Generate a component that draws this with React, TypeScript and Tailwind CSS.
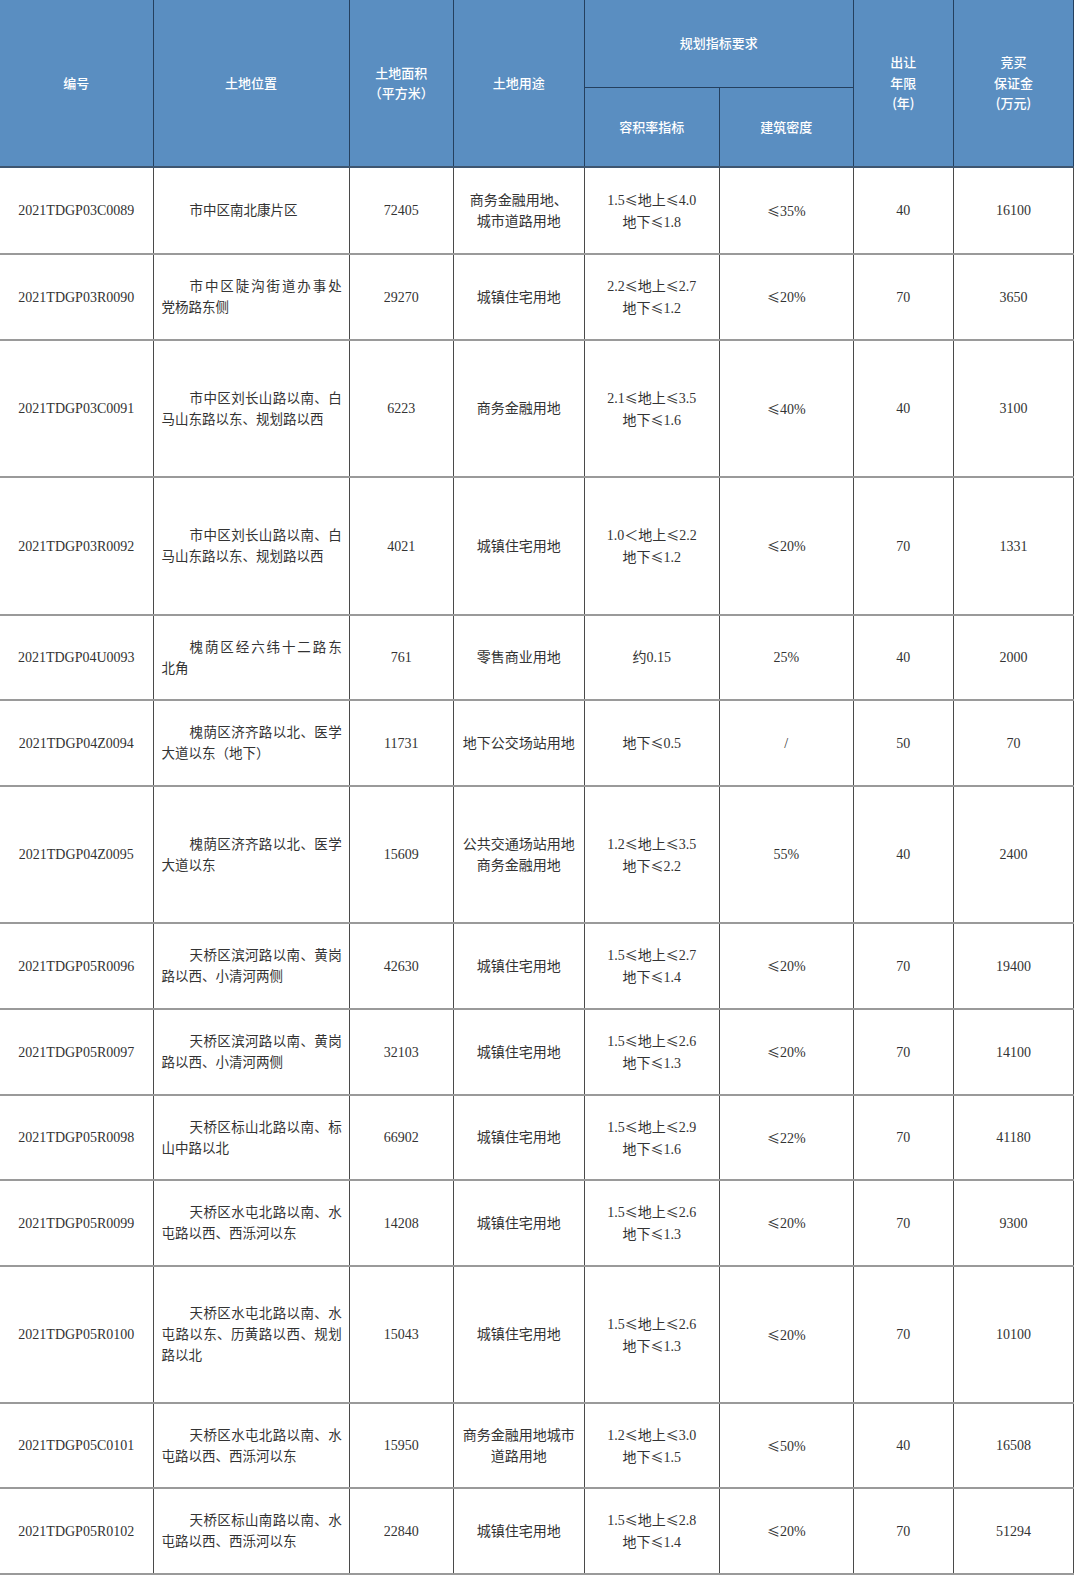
const COLS = [153, 196, 104, 131, 135, 134, 100, 120]

type Row = {
  code: string
  place: string[]
  area: string
  use: string[]
  ratio: string[]
  density: string
  years: string
  deposit: string
  h: number
}

const rows: Row[] = [
  { code: '2021TDGP03C0089', place: ['市中区南北康片区'], area: '72405', use: ['商务金融用地、', '城市道路用地'], ratio: ['1.5≤地上≤4.0', '地下≤1.8'], density: '≤35%', years: '40', deposit: '16100', h: 87 },
  { code: '2021TDGP03R0090', place: ['市中区陡沟街道办事处', '党杨路东侧'], area: '29270', use: ['城镇住宅用地'], ratio: ['2.2≤地上≤2.7', '地下≤1.2'], density: '≤20%', years: '70', deposit: '3650', h: 86 },
  { code: '2021TDGP03C0091', place: ['市中区刘长山路以南、白', '马山东路以东、规划路以西'], area: '6223', use: ['商务金融用地'], ratio: ['2.1≤地上≤3.5', '地下≤1.6'], density: '≤40%', years: '40', deposit: '3100', h: 137 },
  { code: '2021TDGP03R0092', place: ['市中区刘长山路以南、白', '马山东路以东、规划路以西'], area: '4021', use: ['城镇住宅用地'], ratio: ['1.0＜地上≤2.2', '地下≤1.2'], density: '≤20%', years: '70', deposit: '1331', h: 138 },
  { code: '2021TDGP04U0093', place: ['槐荫区经六纬十二路东', '北角'], area: '761', use: ['零售商业用地'], ratio: ['约0.15'], density: '25%', years: '40', deposit: '2000', h: 85 },
  { code: '2021TDGP04Z0094', place: ['槐荫区济齐路以北、医学', '大道以东（地下）'], area: '11731', use: ['地下公交场站用地'], ratio: ['地下≤0.5'], density: '/', years: '50', deposit: '70', h: 86 },
  { code: '2021TDGP04Z0095', place: ['槐荫区济齐路以北、医学', '大道以东'], area: '15609', use: ['公共交通场站用地', '商务金融用地'], ratio: ['1.2≤地上≤3.5', '地下≤2.2'], density: '55%', years: '40', deposit: '2400', h: 137 },
  { code: '2021TDGP05R0096', place: ['天桥区滨河路以南、黄岗', '路以西、小清河两侧'], area: '42630', use: ['城镇住宅用地'], ratio: ['1.5≤地上≤2.7', '地下≤1.4'], density: '≤20%', years: '70', deposit: '19400', h: 86 },
  { code: '2021TDGP05R0097', place: ['天桥区滨河路以南、黄岗', '路以西、小清河两侧'], area: '32103', use: ['城镇住宅用地'], ratio: ['1.5≤地上≤2.6', '地下≤1.3'], density: '≤20%', years: '70', deposit: '14100', h: 86 },
  { code: '2021TDGP05R0098', place: ['天桥区标山北路以南、标', '山中路以北'], area: '66902', use: ['城镇住宅用地'], ratio: ['1.5≤地上≤2.9', '地下≤1.6'], density: '≤22%', years: '70', deposit: '41180', h: 85 },
  { code: '2021TDGP05R0099', place: ['天桥区水屯北路以南、水', '屯路以西、西泺河以东'], area: '14208', use: ['城镇住宅用地'], ratio: ['1.5≤地上≤2.6', '地下≤1.3'], density: '≤20%', years: '70', deposit: '9300', h: 86 },
  { code: '2021TDGP05R0100', place: ['天桥区水屯北路以南、水', '屯路以东、历黄路以西、规划', '路以北'], area: '15043', use: ['城镇住宅用地'], ratio: ['1.5≤地上≤2.6', '地下≤1.3'], density: '≤20%', years: '70', deposit: '10100', h: 137 },
  { code: '2021TDGP05C0101', place: ['天桥区水屯北路以南、水', '屯路以西、西泺河以东'], area: '15950', use: ['商务金融用地城市', '道路用地'], ratio: ['1.2≤地上≤3.0', '地下≤1.5'], density: '≤50%', years: '40', deposit: '16508', h: 85 },
  { code: '2021TDGP05R0102', place: ['天桥区标山南路以南、水', '屯路以西、西泺河以东'], area: '22840', use: ['城镇住宅用地'], ratio: ['1.5≤地上≤2.8', '地下≤1.4'], density: '≤20%', years: '70', deposit: '51294', h: 86 },
]

// the ≤ in the source comes from the CJK font, wider than the Latin one
const Sym = ({ text }: { text: string }) => {
  const parts = text.split('≤')
  return (
    <>
      {parts.map((p, i) => (
        <span key={i}>
          {i > 0 && (
            <span className="text-[13px]" style={{ fontFamily: '"Noto Sans CJK SC", sans-serif' }}>
              ≤
            </span>
          )}
          {p}
        </span>
      ))}
    </>
  )
}

const Lines = ({ lines }: { lines: string[] }) => (
  <>
    {lines.map((l) => (
      <div key={l}>
        <Sym text={l} />
      </div>
    ))}
  </>
)

const Place = ({ lines }: { lines: string[] }) => (
  <>
    {lines.map((l, i) => (
      <div
        key={l}
        className={
          (i === 0 ? 'indent-[28px] ' : '') +
          (i < lines.length - 1 ? 'text-justify [text-align-last:justify] whitespace-nowrap' : 'text-left whitespace-nowrap')
        }
      >
        {l}
      </div>
    ))}
  </>
)

const th = 'border border-[#24405f] text-white font-medium align-middle text-center'
const td = 'border-l border-[#4a4a4a] align-middle text-center'

export default function App() {
  return (
    <div className="w-[1080px] h-[1581px] bg-white overflow-hidden">
      <table
        className="table-fixed border-collapse w-[1074px] text-[14px] leading-[21px] text-[#333]"
        style={{ fontFamily: '"Liberation Serif", "Noto Sans CJK SC", serif' }}
      >
        <colgroup>
          {COLS.map((w, i) => (
            <col key={i} style={{ width: w }} />
          ))}
        </colgroup>
        <thead
          className="bg-[#5a8ec1] text-[13px] leading-[20.5px]"
          style={{ fontFamily: '"Noto Sans CJK SC", "Noto Sans", sans-serif' }}
        >
          <tr className="h-[87px]">
            <th rowSpan={2} className={th + ' border-l-0 border-t-0'}>编号</th>
            <th rowSpan={2} className={th + ' border-t-0'}>土地位置</th>
            <th rowSpan={2} className={th + ' border-t-0'}>
              <div>土地面积</div>
              <div>（平方米）</div>
            </th>
            <th rowSpan={2} className={th + ' border-t-0'}>土地用途</th>
            <th colSpan={2} className={th + ' border-t-0'}>规划指标要求</th>
            <th rowSpan={2} className={th + ' border-t-0'}>
              <div>出让</div>
              <div>年限</div>
              <div>(年)</div>
            </th>
            <th rowSpan={2} className={th + ' border-t-0'}>
              <div>竞买</div>
              <div>保证金</div>
              <div>(万元)</div>
            </th>
          </tr>
          <tr className="h-[80px] border-b-2 border-[#3e5670]">
            <th className={th + ' border-b-2 border-b-[#3e5670]'}>容积率指标</th>
            <th className={th + ' border-b-2 border-b-[#3e5670]'}>建筑密度</th>
          </tr>
        </thead>
        <tbody>
          {rows.map((r) => (
            <tr key={r.code} className="border-b-2 border-[#9a9a9a]" style={{ height: r.h }}>
              <td className="align-middle text-center">{r.code}</td>
              <td className={td + ' pl-[8px] pr-[7px] text-[13.5px]'}>
                <Place lines={r.place} />
              </td>
              <td className={td}>{r.area}</td>
              <td className={td}>
                <Lines lines={r.use} />
              </td>
              <td className={td}>
                <Lines lines={r.ratio} />
              </td>
              <td className={td}>
                <Sym text={r.density} />
              </td>
              <td className={td}>{r.years}</td>
              <td className={td + ' border-r'}>{r.deposit}</td>
            </tr>
          ))}
        </tbody>
      </table>
    </div>
  )
}
